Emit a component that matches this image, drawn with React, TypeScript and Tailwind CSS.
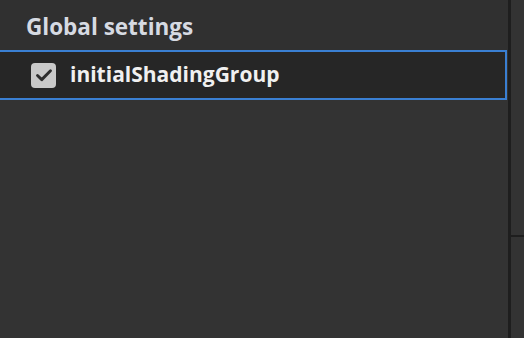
import React from 'react'

const Checkbox: React.FC = () => (
  <div className="flex h-[25px] w-[25px] items-center justify-center rounded-[4px] bg-[#c9c9c9]">
    <svg width="20" height="20" viewBox="0 0 16 16" fill="none">
      <path d="M2.8 8.4l3.4 3.3L13.2 4.6" stroke="#2e2e2e" strokeWidth="2.3" strokeLinecap="round" strokeLinejoin="round" />
    </svg>
  </div>
)

const App: React.FC = () => {
  return (
    <div className="flex h-[338px] w-[524px] overflow-hidden bg-[#333333]" style={{ fontFamily: '"Open Sans", "Noto Sans", sans-serif' }}>
      <div className="flex w-[508px] flex-col">
        <div className="flex h-[50px] items-center bg-[#303030] pl-[26px] pt-[3px]">
          <span className="text-[22.5px] font-bold text-[#d6dae2]">Global settings</span>
        </div>
        <div className="mr-[1px] flex h-[50px] items-center border-2 border-l-0 border-[#3a7fd2] bg-[#262626] pl-[31px]">
          <Checkbox />
          <span className="ml-[14px] text-[21px] font-bold text-[#f0f0f0]">initialShadingGroup</span>
        </div>
        <div className="flex-1" />
      </div>
      <div className="w-[3px] bg-[#1e1e1e]" />
      <div className="flex flex-1 flex-col">
        <div className="h-[235px] bg-[#333333]" />
        <div className="h-[2px] bg-[#1e1e1e]" />
        <div className="flex-1 bg-[#333333]" />
      </div>
    </div>
  )
}

export default App
